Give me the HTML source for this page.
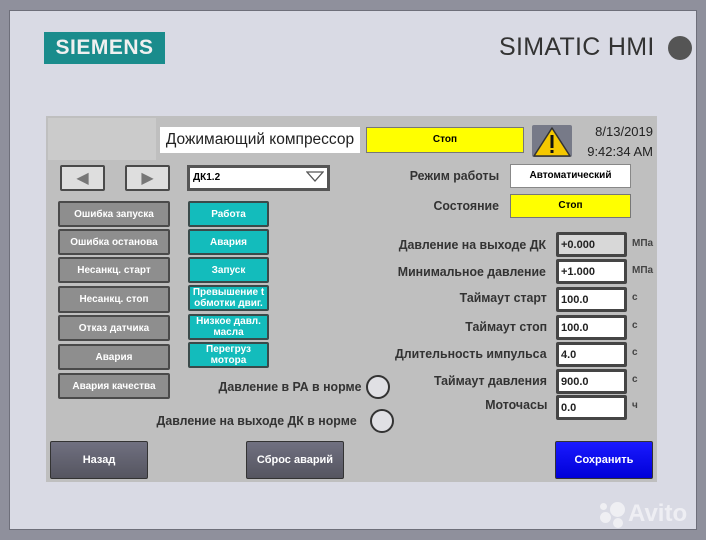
<!DOCTYPE html>
<html><head><meta charset="utf-8"><style>
*{margin:0;padding:0;box-sizing:border-box}
body{width:706px;height:540px;background:#8f909c;position:relative;overflow:hidden;font-family:"Liberation Sans",sans-serif}
.a{position:absolute}
#panel{left:9px;top:10px;width:688px;height:520px;background:#d9dae4;border:1px solid #6e6f7a}
#screen{left:46px;top:116px;width:611px;height:366px;background:#bfbfbf}
.lb{position:absolute;left:58px;width:112px;height:26px;background:#8e8e8e;border:2px solid #4a4a4a;border-radius:2px;color:#fff;font-weight:bold;font-size:10px;display:flex;align-items:center;justify-content:center;text-align:center}
.tb{position:absolute;left:188px;width:81px;height:26px;background:#13bcbc;border:2px solid #3a4a4a;border-radius:2px;color:#fff;font-weight:bold;font-size:10px;display:flex;align-items:center;justify-content:center;text-align:center;line-height:11px}
.lab{position:absolute;right:159px;font-size:13px;font-weight:bold;color:#333;text-align:right;white-space:nowrap;transform:scaleX(0.95);transform-origin:right}
.fld{position:absolute;left:556px;width:71px;height:25px;background:#fff;border:3px solid #454545;border-radius:2px;font-size:11px;font-weight:bold;color:#222;padding:4px 0 0 2px}
.un{position:absolute;left:632px;font-size:10px;font-weight:bold;color:#444}
.bb{position:absolute;top:441px;width:98px;height:38px;background:linear-gradient(#707080,#555560);border:1px solid #333;border-radius:2px;color:#fff;font-weight:bold;font-size:11px;display:flex;align-items:center;justify-content:center}
.nav{position:absolute;top:165px;width:45px;height:26px;background:#dedede;border:2px solid #4a4a4a;border-radius:2px;display:flex;align-items:center;justify-content:center;color:#777;font-size:16px}
.circ{position:absolute;width:24px;height:24px;border-radius:50%;background:#e0e0e4;border:2px solid #333}
.w{position:absolute;background:#f2f2f6;opacity:.85;border-radius:50%}
</style></head><body>
<div id="panel" class="a"></div>
<div class="a" style="left:44px;top:32px;width:121px;height:32px;background:#1a8c8c;color:#f0f0f0;font-weight:bold;font-size:21px;line-height:32px;text-align:center;letter-spacing:0.5px">SIEMENS</div>
<div class="a" style="left:499px;top:33px;font-size:25px;color:#333;letter-spacing:0.3px">SIMATIC HMI</div>
<div class="a" style="left:668px;top:36px;width:24px;height:24px;border-radius:50%;background:#555"></div>
<div id="screen" class="a"></div>
<div class="a" style="left:48px;top:118px;width:108px;height:42px;background:#cbcbcb"></div>
<div class="a" style="left:160px;top:127px;width:200px;height:26px;background:#fff;font-size:15.5px;color:#222;line-height:26px;text-align:center">Дожимающий компрессор</div>
<div class="a" style="left:366px;top:127px;width:158px;height:26px;background:#ffff00;border:1px solid #777;font-size:10px;font-weight:bold;line-height:24px;text-align:center">Стоп</div>
<div class="a" style="left:532px;top:125px;width:40px;height:32px;background:#777a88;border-radius:2px"></div>
<svg class="a" style="left:532px;top:125px" width="40" height="32"><polygon points="20,3 38,31 2,31" fill="#f5c800" stroke="#333" stroke-width="1.5" stroke-linejoin="round"/><rect x="18.5" y="10" width="3" height="13" fill="#111"/><rect x="18.5" y="25" width="3" height="3" fill="#111"/></svg>
<div class="a" style="left:576px;top:122px;width:77px;font-size:13px;color:#222;text-align:right;line-height:20px">8/13/2019<br>9:42:34 AM</div>
<div class="nav" style="left:60px">◀</div>
<div class="nav" style="left:125px">▶</div>
<div class="a" style="left:187px;top:165px;width:143px;height:26px;background:#fff;border:3px solid #555;font-size:10px;font-weight:bold;padding:4px 0 0 3px">ДК1.2</div>
<svg class="a" style="left:306px;top:171px" width="18" height="12"><polygon points="1,1 17,1 9,10" fill="none" stroke="#555" stroke-width="1.3"/></svg>
<div class="lb" style="top:201px">Ошибка запуска</div>
<div class="lb" style="top:229px">Ошибка останова</div>
<div class="lb" style="top:257px">Несанкц. старт</div>
<div class="lb" style="top:286px;height:27px">Несанкц. стоп</div>
<div class="lb" style="top:315px">Отказ датчика</div>
<div class="lb" style="top:344px">Авария</div>
<div class="lb" style="top:373px">Авария качества</div>
<div class="tb" style="top:201px">Работа</div>
<div class="tb" style="top:229px">Авария</div>
<div class="tb" style="top:257px">Запуск</div>
<div class="tb" style="top:285px">Превышение t обмотки двиг.</div>
<div class="tb" style="top:314px">Низкое давл. масла</div>
<div class="tb" style="top:342px">Перегруз мотора</div>
<div class="lab" style="top:168px;right:207px">Режим работы</div>
<div class="a" style="left:510px;top:164px;width:121px;height:24px;background:#fff;border:1px solid #888;font-size:10px;font-weight:bold;text-align:center;line-height:22px">Автоматический</div>
<div class="lab" style="top:198px;right:207px">Состояние</div>
<div class="a" style="left:510px;top:194px;width:121px;height:24px;background:#ffff00;border:1px solid #777;font-size:10px;font-weight:bold;text-align:center;line-height:22px">Стоп</div>
<div class="lab" style="top:237px;right:160px">Давление на выходе ДК</div>
<div class="fld" style="top:232px;background:#d8d8d8">+0.000</div><div class="un" style="top:238px">МПа</div>
<div class="lab" style="top:264px;right:160px">Минимальное давление</div>
<div class="fld" style="top:259px">+1.000</div><div class="un" style="top:265px">МПа</div>
<div class="lab" style="top:290px">Таймаут старт</div>
<div class="fld" style="top:287px">100.0</div><div class="un" style="top:292px">с</div>
<div class="lab" style="top:319px">Таймаут стоп</div>
<div class="fld" style="top:315px">100.0</div><div class="un" style="top:320px">с</div>
<div class="lab" style="top:346px">Длительность импульса</div>
<div class="fld" style="top:342px">4.0</div><div class="un" style="top:347px">с</div>
<div class="lab" style="top:373px">Таймаут давления</div>
<div class="fld" style="top:369px">900.0</div><div class="un" style="top:374px">с</div>
<div class="lab" style="top:397px">Моточасы</div>
<div class="fld" style="top:395px">0.0</div><div class="un" style="top:400px">ч</div>
<div class="lab" style="top:379px;right:345px">Давление в РА в норме</div>
<div class="circ" style="left:366px;top:375px"></div>
<div class="lab" style="top:413px;right:349px">Давление на выходе ДК в норме</div>
<div class="circ" style="left:370px;top:409px"></div>
<div class="bb" style="left:50px">Назад</div>
<div class="bb" style="left:246px">Сброс аварий</div>
<div class="bb" style="left:555px;background:linear-gradient(#1a1aff,#0000d8)">Сохранить</div>
<div class="a" style="left:628px;top:500px;font-size:24px;font-weight:bold;color:#f2f2f6;opacity:.85">Avito</div>
<div class="w" style="left:600px;top:512px;width:11px;height:11px"></div>
<div class="w" style="left:610px;top:502px;width:15px;height:15px"></div>
<div class="w" style="left:613px;top:518px;width:10px;height:10px"></div>
<div class="w" style="left:600px;top:503px;width:7px;height:7px"></div>
</body></html>
